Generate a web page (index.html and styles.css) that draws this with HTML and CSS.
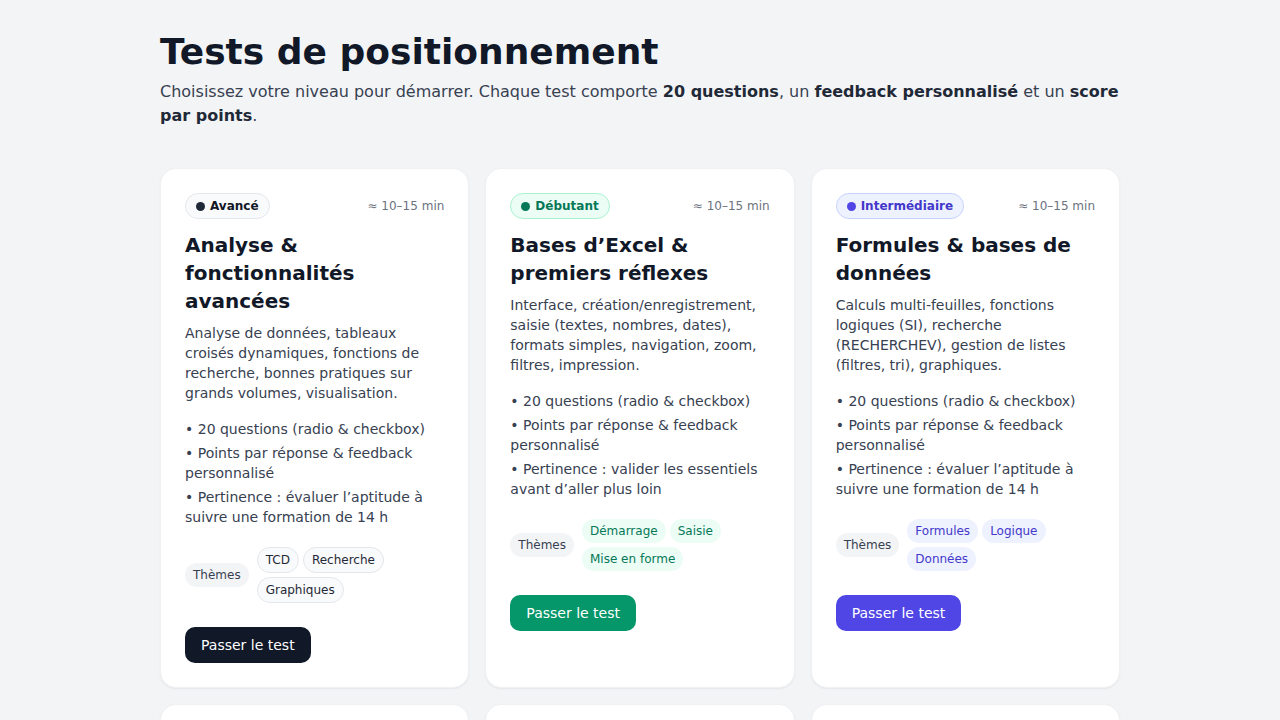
FILE: index.html
```html
<!DOCTYPE html>
<html lang="fr">
<head>
<meta charset="utf-8">
<title>Tests de positionnement</title>
<link rel="stylesheet" href="styles.css">
</head>
<body>
<main class="page">
  <header class="intro">
    <h1 class="intro-title">Tests de positionnement</h1>
    <p class="intro-text">Choisissez votre niveau pour démarrer. Chaque test comporte <strong>20 questions</strong>, un <strong>feedback personnalisé</strong> et un <strong>score par points</strong>.</p>
  </header>

  <section class="grid">
    <article class="card">
      <div class="card-head">
        <span class="badge badge-dark"><span class="dot"></span>Avancé</span>
        <span class="duration">≈ 10–15 min</span>
      </div>
      <h2 class="card-title">Analyse &amp; fonctionnalités avancées</h2>
      <p class="card-desc">Analyse de données, tableaux croisés dynamiques, fonctions de recherche, bonnes pratiques sur grands volumes, visualisation.</p>
      <ul class="points">
        <li>20 questions (radio &amp; checkbox)</li>
        <li>Points par réponse &amp; feedback personnalisé</li>
        <li>Pertinence : évaluer l’aptitude à suivre une formation de 14 h</li>
      </ul>
      <div class="themes">
        <span class="themes-label">Thèmes</span>
        <div class="tags">
          <span class="tag tag-dark">TCD</span>
          <span class="tag tag-dark">Recherche</span>
          <span class="tag tag-dark">Graphiques</span>
        </div>
      </div>
      <div class="actions"><button class="btn btn-dark">Passer le test</button></div>
    </article>

    <article class="card">
      <div class="card-head">
        <span class="badge badge-green"><span class="dot"></span>Débutant</span>
        <span class="duration">≈ 10–15 min</span>
      </div>
      <h2 class="card-title">Bases d’Excel &amp; premiers réflexes</h2>
      <p class="card-desc">Interface, création/enregistrement, saisie (textes, nombres, dates), formats simples, navigation, zoom, filtres, impression.</p>
      <ul class="points">
        <li>20 questions (radio &amp; checkbox)</li>
        <li>Points par réponse &amp; feedback personnalisé</li>
        <li>Pertinence : valider les essentiels avant d’aller plus loin</li>
      </ul>
      <div class="themes">
        <span class="themes-label">Thèmes</span>
        <div class="tags">
          <span class="tag tag-green">Démarrage</span>
          <span class="tag tag-green">Saisie</span>
          <span class="tag tag-green">Mise en forme</span>
        </div>
      </div>
      <div class="actions"><button class="btn btn-green">Passer le test</button></div>
    </article>

    <article class="card">
      <div class="card-head">
        <span class="badge badge-indigo"><span class="dot"></span>Intermédiaire</span>
        <span class="duration">≈ 10–15 min</span>
      </div>
      <h2 class="card-title">Formules &amp; bases de données</h2>
      <p class="card-desc">Calculs multi-feuilles, fonctions logiques (SI), recherche (RECHERCHEV), gestion de listes (filtres, tri), graphiques.</p>
      <ul class="points">
        <li>20 questions (radio &amp; checkbox)</li>
        <li>Points par réponse &amp; feedback personnalisé</li>
        <li>Pertinence : évaluer l’aptitude à suivre une formation de 14 h</li>
      </ul>
      <div class="themes">
        <span class="themes-label">Thèmes</span>
        <div class="tags">
          <span class="tag tag-indigo">Formules</span>
          <span class="tag tag-indigo">Logique</span>
          <span class="tag tag-indigo">Données</span>
        </div>
      </div>
      <div class="actions"><button class="btn btn-indigo">Passer le test</button></div>
    </article>

    <article class="card">
      <div class="card-head">
        <span class="badge badge-dark"><span class="dot"></span>Expert</span>
        <span class="duration">≈ 10–15 min</span>
      </div>
      <h2 class="card-title">Automatisation &amp; macros</h2>
      <p class="card-desc">Enregistreur de macros, VBA, Power Query, modèles de données.</p>
    </article>

    <article class="card">
      <div class="card-head">
        <span class="badge badge-green"><span class="dot"></span>Débutant</span>
        <span class="duration">≈ 10–15 min</span>
      </div>
      <h2 class="card-title">Word &amp; mise en page</h2>
      <p class="card-desc">Styles, tableaux, en-têtes et pieds de page, impression.</p>
    </article>

    <article class="card">
      <div class="card-head">
        <span class="badge badge-indigo"><span class="dot"></span>Intermédiaire</span>
        <span class="duration">≈ 10–15 min</span>
      </div>
      <h2 class="card-title">PowerPoint &amp; présentations</h2>
      <p class="card-desc">Masques, animations, transitions, diffusion.</p>
    </article>
  </section>
</main>
</body>
</html>
```

FILE: styles.css
```css
* { box-sizing: border-box; }

html, body {
  margin: 0;
  padding: 0;
}

body {
  background: #f3f4f6;
  font-family: "DejaVu Sans", "Noto Sans", sans-serif;
  color: #111827;
}

.page {
  width: 960px;
  margin: 0 auto;
  padding: 32px 0 32px;
}

.intro-title {
  margin: 0;
  font-size: 36px;
  line-height: 40px;
  font-weight: 700;
  color: #111827;
}

.intro-text {
  margin: 8px 0 0;
  font-size: 16px;
  line-height: 24px;
  color: #374151;
}

.intro-text strong {
  font-weight: 700;
  color: #1f2937;
}

.grid {
  margin-top: 40px;
  display: grid;
  grid-template-columns: repeat(3, 1fr);
  gap: 16px;
}

.card {
  background: #ffffff;
  border: 1px solid #f0f1f3;
  border-radius: 16px;
  padding: 24px;
  box-shadow: 0 1px 2px rgba(17, 24, 39, 0.06);
}

.card-head {
  display: flex;
  align-items: center;
  justify-content: space-between;
}

.badge {
  display: inline-flex;
  align-items: center;
  gap: 5px;
  padding: 4px 10px;
  border: 1px solid;
  border-radius: 999px;
  font-size: 12px;
  line-height: 16px;
  font-weight: 700;
}

.dot {
  width: 9px;
  height: 9px;
  border-radius: 50%;
  background: currentColor;
}

.badge-dark { background: #f9fafb; border-color: #e5e7eb; color: #111827; }
.badge-dark .dot { background: #1f2937; }
.badge-green { background: #ecfdf5; border-color: #a7f3d0; color: #047857; }
.badge-indigo { background: #eef2ff; border-color: #c7d2fe; color: #4338ca; }
.badge-indigo .dot { background: #4f46e5; }

.duration {
  font-size: 12px;
  line-height: 16px;
  color: #6b7280;
}

.card-title {
  margin: 12px 0 0;
  font-size: 20px;
  line-height: 28px;
  font-weight: 700;
  color: #111827;
}

.card-desc {
  margin: 8px 0 0;
  font-size: 14px;
  line-height: 20px;
  color: #374151;
}

.points {
  margin: 16px 0 0;
  padding: 0;
  list-style: none;
  display: flex;
  flex-direction: column;
  gap: 4px;
  font-size: 14px;
  line-height: 20px;
  color: #374151;
}

.points li::before {
  content: "• ";
}

.themes {
  margin-top: 20px;
  display: flex;
  align-items: center;
  gap: 8px;
}

.themes-label {
  flex: none;
  padding: 4px 8px;
  border-radius: 999px;
  background: #f3f4f6;
  color: #374151;
  font-size: 12px;
  line-height: 16px;
}

.tags {
  display: flex;
  flex-wrap: wrap;
  gap: 4px;
}

.tag {
  padding: 4px 8px;
  border-radius: 999px;
  font-size: 12px;
  line-height: 16px;
}

.tag-dark { background: #f9fafb; border: 1px solid #e5e7eb; color: #1f2937; }
.tag-green { background: #ecfdf5; color: #047857; }
.tag-indigo { background: #eef2ff; color: #4338ca; }

.actions {
  margin-top: 24px;
}

.btn {
  height: 36px;
  padding: 0 16px;
  border: none;
  border-radius: 10px;
  font-family: inherit;
  font-size: 14px;
  color: #ffffff;
  cursor: pointer;
}

.btn-dark { background: #111827; }
.btn-green { background: #059669; }
.btn-indigo { background: #4f46e5; }
```
